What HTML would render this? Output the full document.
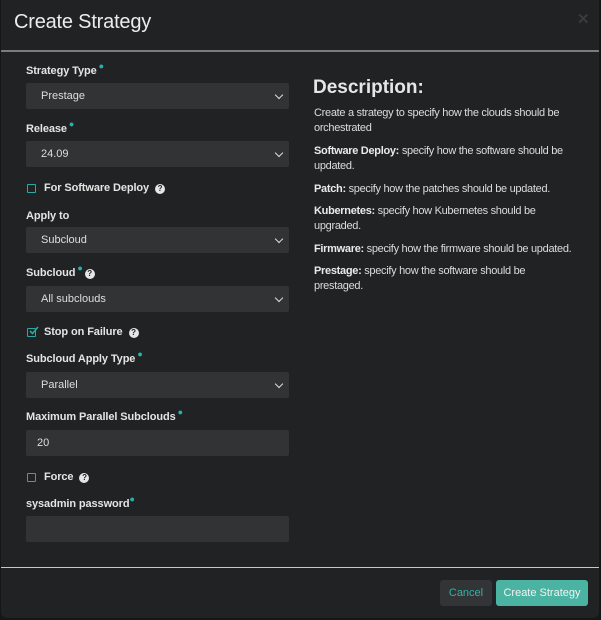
<!DOCTYPE html>
<html><head><meta charset="utf-8"><style>
*{margin:0;padding:0;box-sizing:border-box}
body{width:601px;height:620px;background:#151616;font-family:"Liberation Sans",sans-serif;position:relative;overflow:hidden;color:#e2e2e2}
.m{position:absolute;left:1px;top:0;width:598px;height:618px;background:#212223;border-radius:0 0 6px 6px}
.a{position:absolute}
.t{left:13px;top:11px;font-size:20px;color:#ececec;letter-spacing:-0.2px}
.hl{left:0;width:598px;height:2px;background:#7a7b7b}
.lb{font-size:11px;font-weight:bold;color:#e4e4e4;left:25px;letter-spacing:-0.1px}
.st{color:#20b5b0;font-size:9px;vertical-align:top;position:relative;top:-4px;margin-left:2px}
.sel{left:25px;width:263px;height:26px;background:#323334;border-radius:2px;font-size:11px;color:#dedede;padding:0 0 0 15px;line-height:26px}
.sel.d::after{content:"";position:absolute;right:7px;top:9px;width:5px;height:5px;border-right:1.5px solid #ddd;border-bottom:1.5px solid #ddd;transform:rotate(45deg)}
.inp{padding-left:11px}
.cb{left:26px;width:9px;height:9px;border:1.5px solid #2aa9a2;border-radius:1px}
.q{display:inline-block;width:10px;height:10px;border-radius:50%;background:#e6e6e6;color:#222;font-size:8px;font-weight:bold;text-align:center;line-height:10px;margin-left:6px;vertical-align:0px}
.r{left:313px;font-size:11px;color:#dcdcdc;line-height:15px;width:285px;letter-spacing:-0.3px}
.r b{color:#eaeaea}
</style></head><body>
<div class="m">
<div class="a t">Create Strategy</div>
<div class="a" style="left:576px;top:10px;font-size:15px;color:#3a3b3c;font-weight:bold">✕</div>
<div class="a hl" style="top:50px"></div>

<div class="a lb" style="top:65px">Strategy Type<span class="st">●</span></div>
<div class="a sel d" style="top:83px">Prestage</div>
<div class="a lb" style="top:123px">Release<span class="st">●</span></div>
<div class="a sel d" style="top:141px">24.09</div>
<div class="a cb" style="top:184px"></div>
<div class="a lb" style="left:43px;top:182px">For Software Deploy<span class="q">?</span></div>
<div class="a lb" style="top:210px">Apply to</div>
<div class="a sel d" style="top:227px">Subcloud</div>
<div class="a lb" style="top:267px">Subcloud<span class="st">●</span><span class="q" style="margin-left:2px">?</span></div>
<div class="a sel d" style="top:286px">All subclouds</div>
<div class="a cb" style="top:328px"></div>
<svg class="a" style="left:27px;top:326px" width="11" height="10" viewBox="0 0 11 10"><path d="M2 5 L4.5 7.5 L10 1" fill="none" stroke="#2aa9a2" stroke-width="1.6"/></svg>
<div class="a lb" style="left:43px;top:326px">Stop on Failure<span class="q">?</span></div>
<div class="a lb" style="top:353px">Subcloud Apply Type<span class="st">●</span></div>
<div class="a sel d" style="top:372px">Parallel</div>
<div class="a lb" style="top:411px">Maximum Parallel Subclouds<span class="st">●</span></div>
<div class="a sel inp" style="top:430px">20</div>
<div class="a cb" style="top:473px"></div>
<div class="a lb" style="left:43px;top:471px">Force<span class="q">?</span></div>
<div class="a lb" style="top:498px">sysadmin password<span class="st" style="margin-left:0">●</span></div>
<div class="a sel" style="top:516px"></div>

<div class="a" style="left:312px;top:77px;font-size:19px;font-weight:bold;color:#e6e6e6">Description:</div>
<div class="a r" style="top:106px;width:270px">Create a strategy to specify how the clouds should be orchestrated</div>
<div class="a r" style="top:144px;width:270px"><b>Software Deploy:</b> specify how the software should be updated.</div>
<div class="a r" style="top:182px"><b>Patch:</b> specify how the patches should be updated.</div>
<div class="a r" style="top:204px;width:250px"><b>Kubernetes:</b> specify how Kubernetes should be upgraded.</div>
<div class="a r" style="top:242px"><b>Firmware:</b> specify how the firmware should be updated.</div>
<div class="a r" style="top:264px;width:240px"><b>Prestage:</b> specify how the software should be prestaged.</div>

<div class="a hl" style="top:567px;background:#c8c8c8;height:1px"></div>
<div class="a" style="left:439px;top:580px;width:52px;height:26px;background:#333435;border-radius:3px;color:#2fb5a9;font-size:11px;text-align:center;line-height:26px">Cancel</div>
<div class="a" style="left:495px;top:580px;width:92px;height:26px;background:#4ab3a2;border-radius:3px;color:#f2f2f2;font-size:11px;text-align:center;line-height:26px">Create Strategy</div>
</div>
</body></html>
